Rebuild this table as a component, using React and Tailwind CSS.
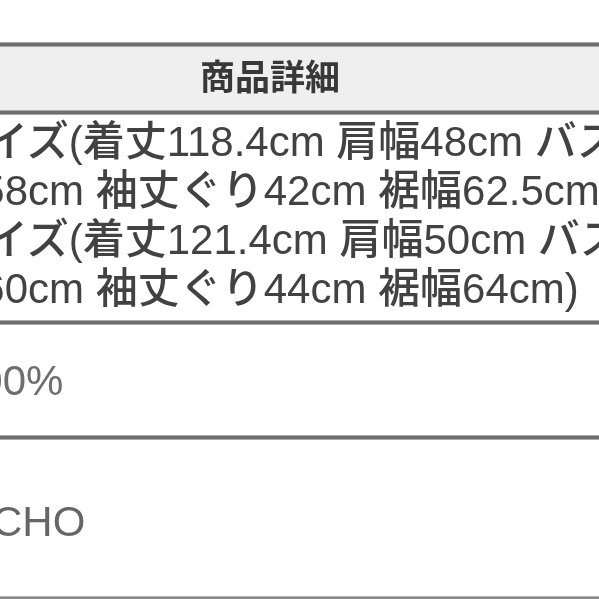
import React from "react";

const FONT = {
  fontFamily: '"Liberation Sans", "Noto Sans CJK JP", sans-serif',
};

function Rule({ thin = false }) {
  return thin ? (
    <div className="h-[3px] bg-[#8a8a8a] border-t border-[#b5b5b5]" />
  ) : (
    <div className="h-[5px] bg-[#6e6e6e] border-y border-[#a9a9a9]" />
  );
}

function Line({ offset, children }) {
  return (
    <div className="h-[49px] leading-[49px] whitespace-nowrap" style={{ marginLeft: offset }}>
      {children}
    </div>
  );
}

export default function App() {
  return (
    <div className="w-[599px] h-[599px] bg-white overflow-hidden" style={FONT}>
      <div className="h-[42px] bg-white" />
      <Rule />
      <div className="h-[63px] bg-[#efefef] flex items-center">
        <div className="w-[540px] text-center font-bold text-[35px] text-[#383838] blur-[0.5px]">
          商品詳細
        </div>
      </div>
      <Rule />
      <div className="h-[205px] pt-[2px] text-[42px] font-medium text-[#424242] overflow-hidden blur-[0.5px]">
        <Line offset="-56px">サイズ(着丈118.4cm 肩幅48cm バスト</Line>
        <Line offset="-42px">158cm 袖丈ぐり42cm 裾幅62.5cm</Line>
        <Line offset="-56px">サイズ(着丈121.4cm 肩幅50cm バスト</Line>
        <Line offset="-42px">160cm 袖丈ぐり44cm 裾幅64cm)</Line>
      </div>
      <Rule />
      <div className="h-[110px] flex items-center text-[42px] text-[#6e6e6e] overflow-hidden blur-[0.5px]">
        <span className="whitespace-nowrap ml-[-44px]">100%</span>
      </div>
      <Rule />
      <div className="h-[156px] flex items-center pt-[6px] text-[42px] text-[#666666] overflow-hidden blur-[0.5px]">
        <span className="whitespace-nowrap ml-[-8px]">CHO</span>
      </div>
      <Rule thin />
    </div>
  );
}
